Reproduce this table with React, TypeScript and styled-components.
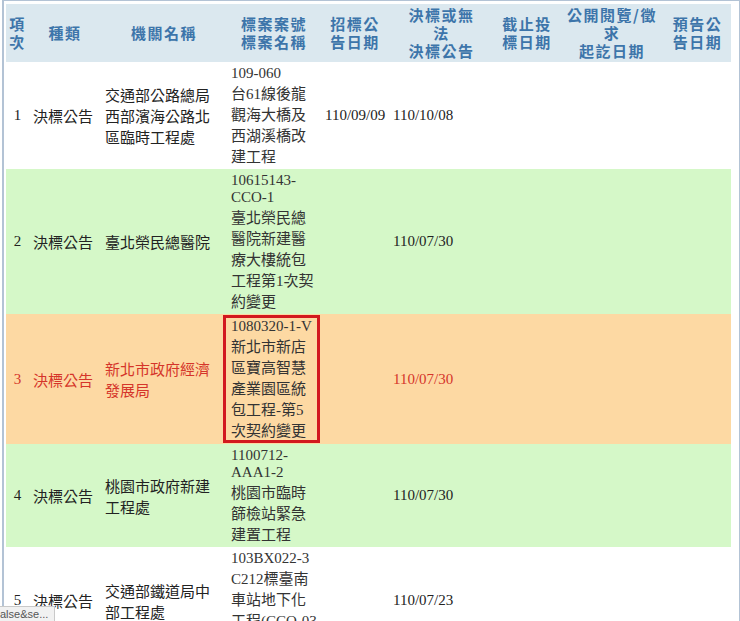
import React from "react";
import styled, { createGlobalStyle } from "styled-components";

const Global = createGlobalStyle`
  html, body { margin: 0; padding: 0; background: #ffffff; }
  body { font-family: "Liberation Serif", "Noto Sans CJK TC", serif; }
`;

const Frame = styled.div`
  margin-left: 2px;
  width: 730px;
  border: 2px solid #b3c3d5;
  border-top-width: 1px;
  border-bottom: none;
  padding: 3px 3px 0 2px;
  min-height: 640px;
`;

const Table = styled.table`
  width: 725px;
  table-layout: fixed;
  border-collapse: collapse;
  font-size: 15px;
  color: #222;
`;

const HeadCell = styled.th`
  background: #dbe8ef;
  color: #3d75aa;
  font-family: "Noto Sans CJK TC", sans-serif;
  font-weight: 700;
  font-size: 15px;
  line-height: 18px;
  letter-spacing: 1.5px;
  text-align: center;
  vertical-align: middle;
  padding: 2px 0;
`;

type Tone = "white" | "green" | "orange";
const bg: Record<Tone, string> = {
  white: "#ffffff",
  green: "#d5f8c8",
  orange: "#fdd9a3",
};

const Row = styled.tr<{ $tone: Tone }>`
  background: ${(p) => bg[p.$tone]};
  color: ${(p) => (p.$tone === "orange" ? "#d5352a" : "#222")};
`;

const Cell = styled.td<{ $align?: "left" | "center" }>`
  padding: 3px 4px;
  vertical-align: middle;
  text-align: ${(p) => p.$align || "left"};
  line-height: normal;
`;

const DateCell = styled(Cell)`
  white-space: nowrap;
`;

const CaseText = styled.div`
  color: #333;
`;

const Boxed = styled.div`
  border: 3px solid #d2191f;
  margin: -2px -3px -2px -8px;
  padding: 0 0 0 5px;
  color: #333;
`;

const Status = styled.div`
  position: fixed;
  left: 0;
  bottom: 0;
  height: 14px;
  padding: 0 6px 0 0;
  background: #f1f1f1;
  border-top: 1px solid #c9c9c9;
  border-right: 1px solid #c9c9c9;
  font-family: "Liberation Sans", sans-serif;
  font-size: 11px;
  line-height: 14px;
  color: #555;
`;

const widths = [23, 72, 126, 94, 68, 105, 66, 104, 67];
const heads: string[][] = [
  ["項", "次"],
  ["種類"],
  ["機關名稱"],
  ["標案案號", "標案名稱"],
  ["招標公", "告日期"],
  ["決標或無", "法", "決標公告"],
  ["截止投", "標日期"],
  ["公開閱覽/徵", "求", "起訖日期"],
  ["預告公", "告日期"],
];

type Rec = {
  no: string;
  tone: Tone;
  agency: string;
  caseNo: string;
  caseName: string;
  pub?: string;
  award: string;
  boxed?: boolean;
};

const rows: Rec[] = [
  {
    no: "1",
    tone: "white",
    agency: "交通部公路總局西部濱海公路北區臨時工程處",
    caseNo: "109-060",
    caseName: "台61線後龍觀海大橋及西湖溪橋改建工程",
    pub: "110/09/09",
    award: "110/10/08",
  },
  {
    no: "2",
    tone: "green",
    agency: "臺北榮民總醫院",
    caseNo: "10615143-CCO-1",
    caseName: "臺北榮民總醫院新建醫療大樓統包工程第1次契約變更",
    award: "110/07/30",
  },
  {
    no: "3",
    tone: "orange",
    agency: "新北市政府經濟發展局",
    caseNo: "1080320-1-V",
    caseName: "新北市新店區寶高智慧產業園區統包工程-第5次契約變更",
    award: "110/07/30",
    boxed: true,
  },
  {
    no: "4",
    tone: "green",
    agency: "桃園市政府新建工程處",
    caseNo: "1100712-AAA1-2",
    caseName: "桃園市臨時篩檢站緊急建置工程",
    award: "110/07/30",
  },
  {
    no: "5",
    tone: "white",
    agency: "交通部鐵道局中部工程處",
    caseNo: "103BX022-3",
    caseName: "C212標臺南車站地下化工程(CCO-03第1次變更)",
    award: "110/07/23",
  },
];

function CaseContent({ r }: { r: Rec }) {
  const inner = (
    <>
      <div>{r.caseNo}</div>
      <div>{r.caseName}</div>
    </>
  );
  return r.boxed ? <Boxed>{inner}</Boxed> : <CaseText>{inner}</CaseText>;
}

export default function App() {
  return (
    <>
      <Global />
      <Frame>
        <Table>
          <colgroup>
            {widths.map((w, i) => (
              <col key={i} style={{ width: w }} />
            ))}
          </colgroup>
          <thead>
            <tr>
              {heads.map((h, i) => (
                <HeadCell key={i}>
                  {h.map((line, j) => (
                    <div key={j}>{line}</div>
                  ))}
                </HeadCell>
              ))}
            </tr>
          </thead>
          <tbody>
            {rows.map((r) => (
              <Row key={r.no} $tone={r.tone}>
                <Cell $align="center">{r.no}</Cell>
                <Cell>決標公告</Cell>
                <Cell>{r.agency}</Cell>
                <Cell>
                  <CaseContent r={r} />
                </Cell>
                <DateCell>{r.pub || ""}</DateCell>
                <DateCell>{r.award}</DateCell>
                <Cell />
                <Cell />
                <Cell />
              </Row>
            ))}
          </tbody>
        </Table>
      </Frame>
      <Status>alse&amp;se...</Status>
    </>
  );
}
